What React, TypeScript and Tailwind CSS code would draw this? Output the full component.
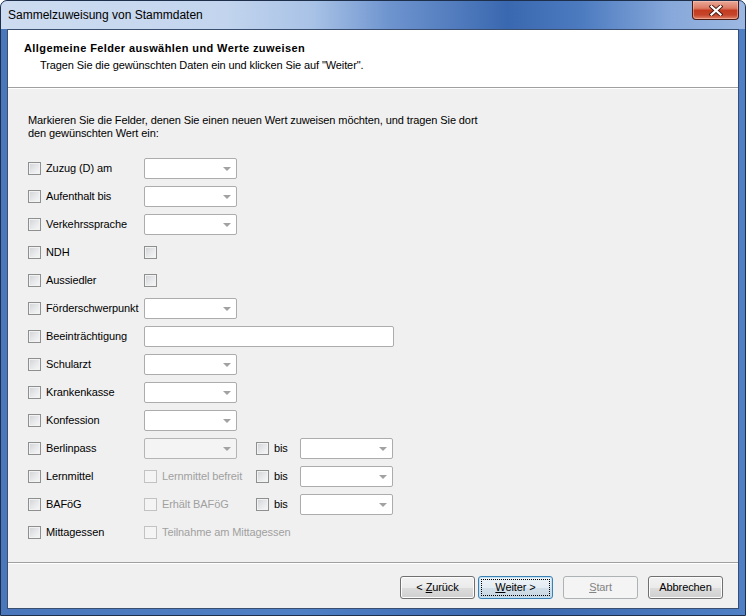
import type { ReactNode } from "react";

// Win7 style checkbox
function CheckBox({ disabled = false }: { disabled?: boolean }) {
  return (
    <span
      className={
        disabled
          ? "block w-[13px] h-[13px] shrink-0 border border-[#c2c2c2] bg-[#f4f4f4]"
          : "block w-[13px] h-[13px] shrink-0 border border-[#8e8f8f] bg-[linear-gradient(135deg,#cfd2d6_0%,#e6e7e9_50%,#f8f8f8_100%)] shadow-[inset_0_0_0_1px_#f2f2f2]"
      }
    />
  );
}

function Combo({ disabled = false }: { disabled?: boolean }) {
  return (
    <div
      className={
        "relative w-[93px] h-[21px] rounded-[2px] border " +
        (disabled ? "border-[#b5b5b5] bg-[#f4f4f4]" : "border-[#acacac] bg-white")
      }
    >
      <svg
        className="absolute right-[5px] top-[8px]"
        width="8"
        height="4"
        viewBox="0 0 8 4"
      >
        <path d="M0 0h8L4 4z" fill="#a2a2a2" />
      </svg>
    </div>
  );
}

function TextBox() {
  return <div className="w-[250px] h-[21px] rounded-[2px] border border-[#acacac] bg-white" />;
}

function Label({ children, disabled = false }: { children: ReactNode; disabled?: boolean }) {
  return (
    <span className={"whitespace-nowrap " + (disabled ? "text-[#a0a0a0]" : "text-black")}>
      {children}
    </span>
  );
}

type Field = {
  label: string;
  kind: "combo" | "check" | "text" | "comboOff" | "option";
  option?: string;
  until?: boolean;
};

const fields: Field[] = [
  { label: "Zuzug (D) am", kind: "combo" },
  { label: "Aufenthalt bis", kind: "combo" },
  { label: "Verkehrssprache", kind: "combo" },
  { label: "NDH", kind: "check" },
  { label: "Aussiedler", kind: "check" },
  { label: "Förderschwerpunkt", kind: "combo" },
  { label: "Beeinträchtigung", kind: "text" },
  { label: "Schularzt", kind: "combo" },
  { label: "Krankenkasse", kind: "combo" },
  { label: "Konfession", kind: "combo" },
  { label: "Berlinpass", kind: "comboOff", until: true },
  { label: "Lernmittel", kind: "option", option: "Lernmittel befreit", until: true },
  { label: "BAFöG", kind: "option", option: "Erhält BAFöG", until: true },
  { label: "Mittagessen", kind: "option", option: "Teilnahme am Mittagessen" },
];

function FieldRow({ field }: { field: Field }) {
  let value: ReactNode = null;
  if (field.kind === "combo") value = <Combo />;
  if (field.kind === "comboOff") value = <Combo disabled />;
  if (field.kind === "text") value = <TextBox />;
  if (field.kind === "check") value = <CheckBox />;
  if (field.kind === "option")
    value = (
      <div className="flex items-center gap-[5px]">
        <CheckBox disabled />
        <Label disabled>{field.option}</Label>
      </div>
    );

  return (
    <div className="flex items-center h-[28px]">
      <div className="w-[116px] flex items-center gap-[5px]">
        <CheckBox />
        <Label>{field.label}</Label>
      </div>
      <div className={field.until ? "w-[112px]" : ""}>{value}</div>
      {field.until && (
        <>
          <div className="w-[44px] flex items-center gap-[5px]">
            <CheckBox />
            <Label>bis</Label>
          </div>
          <Combo />
        </>
      )}
    </div>
  );
}

function Button({
  children,
  variant = "normal",
}: {
  children: ReactNode;
  variant?: "normal" | "default" | "disabled";
}) {
  if (variant === "disabled") {
    return (
      <div className="w-[75px] h-[23px] flex items-center justify-center rounded-[3px] border border-[#adb2b5] bg-[#f4f4f4] text-[#838383]">
        <span>{children}</span>
      </div>
    );
  }
  if (variant === "default") {
    return (
      <div className="w-[75px] h-[23px] p-[2px] rounded-[3px] border border-[#3c7fb1] bg-[linear-gradient(#eef4f8_0%,#e4edf3_50%,#d3e0ea_50%,#c6d6e2_100%)] shadow-[inset_0_0_0_1px_#bfe1f6]">
        <div className="w-full h-full flex items-center justify-center border border-dotted border-black">
          <span>{children}</span>
        </div>
      </div>
    );
  }
  return (
    <div className="w-[75px] h-[23px] flex items-center justify-center rounded-[3px] border border-[#707070] bg-[linear-gradient(#f2f2f2_0%,#ebebeb_50%,#dddddd_50%,#cfcfcf_100%)] shadow-[inset_0_0_0_1px_#fcfcfc]">
      <span>{children}</span>
    </div>
  );
}

function CloseButton() {
  return (
    <div className="w-[47px] h-[19px] mr-[6px] flex items-center justify-center rounded-b-[4px] border border-t-0 border-[#4b1b12] bg-[linear-gradient(#e9a998_0%,#dc7a64_40%,#c43b20_52%,#c6462b_78%,#e0846a_100%)] shadow-[inset_0_0_0_1px_rgba(255,210,200,0.45)]">
      <svg width="14" height="11" viewBox="0 0 14 11">
        <path d="M2.5 1.5L11.5 9.5M11.5 1.5L2.5 9.5" stroke="#4a1a12" strokeWidth="4" strokeLinecap="square" />
        <path d="M2.5 1.5L11.5 9.5M11.5 1.5L2.5 9.5" stroke="#ffffff" strokeWidth="2.2" strokeLinecap="square" />
      </svg>
    </div>
  );
}

export default function App() {
  return (
    <div className="w-[746px] h-[616px] flex flex-col rounded-t-[7px] border border-[#1d2f4b] bg-[linear-gradient(90deg,#4a77bc_0%,#4f7fc4_40%,#3a68b0_70%,#4f7fc4_100%)] overflow-hidden font-['Liberation_Sans',Arial,sans-serif] text-[11px] leading-[13px] tracking-[-0.1px] text-black">
      {/* title bar */}
      <div className="h-[28px] shrink-0 flex items-start bg-[linear-gradient(90deg,#cddcf0_0%,#c3d5ee_30%,#a8c2e6_42%,#6f95cf_52%,#3a68b0_68%,#4c7bc0_78%,#87a8da_90%,#9cb8e2_100%)]">
        <span className="pl-[7px] pt-[7px] text-[12px] leading-[15px] tracking-normal text-black">
          Sammelzuweisung von Stammdaten
        </span>
        <div className="ml-auto">
          <CloseButton />
        </div>
      </div>

      {/* client area */}
      <div className="flex-1 mx-[6px] mb-[6px] flex flex-col border border-[#3a4f70] bg-[#f0f0f0]">
        <div className="h-[57px] shrink-0 bg-white pl-[16px] pt-[12px]">
          <div className="font-bold tracking-[0.4px]">Allgemeine Felder auswählen und Werte zuweisen</div>
          <div className="pl-[16px] pt-[4px]">
            Tragen Sie die gewünschten Daten ein und klicken Sie auf "Weiter".
          </div>
        </div>
        <div className="h-px bg-[#a0a0a0]" />
        <div className="h-px bg-white" />

        <div className="flex-1 pl-[20px] pt-[25px]">
          <p>
            Markieren Sie die Felder, denen Sie einen neuen Wert zuweisen möchten, und tragen Sie dort
            <br />
            den gewünschten Wert ein:
          </p>
          <div className="mt-[14px] flex flex-col">
            {fields.map((f) => (
              <FieldRow key={f.label} field={f} />
            ))}
          </div>
        </div>

        <div className="h-px bg-[#a0a0a0]" />
        <div className="h-px bg-white" />
        <div className="h-[44px] shrink-0 flex items-start justify-end pt-[12px] pr-[15px]">
          <Button>
            &lt; <span className="underline">Z</span>urück
          </Button>
          <div className="ml-[3px]">
            <Button variant="default">
              <span className="underline">W</span>eiter &gt;
            </Button>
          </div>
          <div className="ml-[10px]">
            <Button variant="disabled">
              <span className="underline">S</span>tart
            </Button>
          </div>
          <div className="ml-[10px]">
            <Button>Abbrechen</Button>
          </div>
        </div>
      </div>
    </div>
  );
}
